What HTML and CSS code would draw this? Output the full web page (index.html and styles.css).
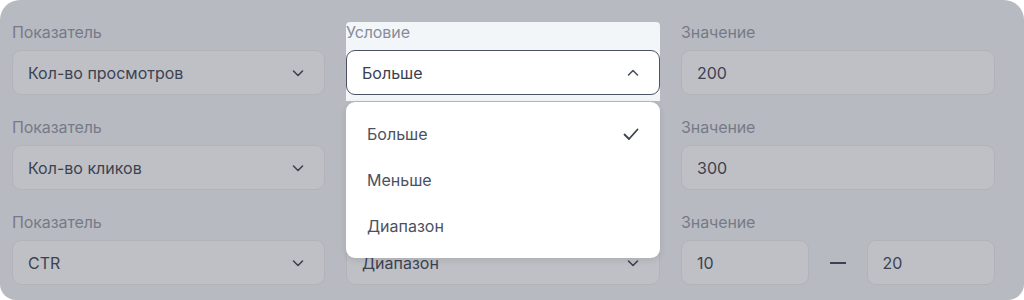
FILE: index.html
```html
<!DOCTYPE html>
<html lang="ru">
<head>
<meta charset="utf-8">
<title>Условия</title>
<link rel="stylesheet" href="styles.css">
</head>
<body>
<div class="card">
  <div class="rules">
    <!-- row 1 -->
    <div class="cell">
      <div class="label">Показатель</div>
      <div class="field">Кол-во просмотров
        <svg class="chev" width="14" height="14" viewBox="0 0 14 14"><path d="M2.5 5l4.5 4.5L11.5 5" fill="none" stroke="currentColor" stroke-width="1.6" stroke-linecap="round" stroke-linejoin="round"/></svg>
      </div>
    </div>
    <div class="cell active">
      <div class="label">Условие</div>
      <div class="field open">Больше
        <svg class="chev" width="14" height="14" viewBox="0 0 14 14"><path d="M2.5 9l4.5-4.5L11.5 9" fill="none" stroke="currentColor" stroke-width="1.6" stroke-linecap="round" stroke-linejoin="round"/></svg>
      </div>
      <ul class="menu">
        <li class="item selected">Больше
          <svg class="check" width="18" height="18" viewBox="0 0 18 18"><path d="M2.5 9.5l4.5 4.5L15.5 4.5" fill="none" stroke="currentColor" stroke-width="1.8" stroke-linecap="round" stroke-linejoin="round"/></svg>
        </li>
        <li class="item">Меньше</li>
        <li class="item">Диапазон</li>
      </ul>
    </div>
    <div class="cell">
      <div class="label">Значение</div>
      <div class="field">200</div>
    </div>

    <!-- row 2 -->
    <div class="cell">
      <div class="label">Показатель</div>
      <div class="field">Кол-во кликов
        <svg class="chev" width="14" height="14" viewBox="0 0 14 14"><path d="M2.5 5l4.5 4.5L11.5 5" fill="none" stroke="currentColor" stroke-width="1.6" stroke-linecap="round" stroke-linejoin="round"/></svg>
      </div>
    </div>
    <div class="cell">
      <div class="label">Условие</div>
      <div class="field">Больше
        <svg class="chev" width="14" height="14" viewBox="0 0 14 14"><path d="M2.5 5l4.5 4.5L11.5 5" fill="none" stroke="currentColor" stroke-width="1.6" stroke-linecap="round" stroke-linejoin="round"/></svg>
      </div>
    </div>
    <div class="cell">
      <div class="label">Значение</div>
      <div class="field">300</div>
    </div>

    <!-- row 3 -->
    <div class="cell">
      <div class="label">Показатель</div>
      <div class="field">CTR
        <svg class="chev" width="14" height="14" viewBox="0 0 14 14"><path d="M2.5 5l4.5 4.5L11.5 5" fill="none" stroke="currentColor" stroke-width="1.6" stroke-linecap="round" stroke-linejoin="round"/></svg>
      </div>
    </div>
    <div class="cell">
      <div class="label">Условие</div>
      <div class="field">Диапазон
        <svg class="chev" width="14" height="14" viewBox="0 0 14 14"><path d="M2.5 5l4.5 4.5L11.5 5" fill="none" stroke="currentColor" stroke-width="1.6" stroke-linecap="round" stroke-linejoin="round"/></svg>
      </div>
    </div>
    <div class="cell">
      <div class="label">Значение</div>
      <div class="range">
        <div class="field">10</div>
        <span class="dash"></span>
        <div class="field">20</div>
      </div>
    </div>
  </div>
</div>
</body>
</html>
```

FILE: styles.css
```css
/* Conditions form, dimmed behind an open select */

html, body
{ margin: 0;
  background: #ffffff;
}

body
{ font-family: Inter, "Noto Sans", sans-serif;
  font-size: 16px;
  color: #3d4251;
}

div.card
{ width: 1024px;
  height: 300px;
  box-sizing: border-box;
  background-color: #b8bac1;
  border-radius: 20px 20px 16px 16px;
  padding: 22px 0 0 12px;
}

div.rules
{ display: grid;
  grid-template-columns: 313px 314px 314px;
  column-gap: 21px;
  row-gap: 22px;
}

div.cell
{ display: flex;
  flex-direction: column;
  gap: 8px;
}

div.label
{ line-height: 20px;
  color: #767a87;
  letter-spacing: -0.1px;
}

div.field
{ display: flex;
  align-items: center;
  justify-content: space-between;
  height: 45px;
  box-sizing: border-box;
  padding: 0 19px 0 15px;
  background-color: #bec0c5;
  border: 1px solid #b1b3b9;
  border-radius: 9px;
  color: #3d4251;
}

svg.chev
{ color: #3d4251;
}

/* the open select sits above the dim layer */

div.active
{ position: relative;
  background-color: #f3f6f9;
  border-radius: 4px 4px 0 0;
  padding-bottom: 6px;
  margin-bottom: -6px;
}

div.active div.label
{ color: #878c99;
}

div.field.open
{ background-color: #ffffff;
  border: 1px solid #4c5261;
  color: #3a404f;
}

div.field.open svg.chev
{ color: #4c5261;
}

ul.menu
{ position: absolute;
  top: calc(100% + 1px);
  left: 0;
  right: 0;
  margin: 0;
  padding: 9px 0;
  list-style: none;
  background-color: #ffffff;
  border-radius: 9px;
  box-shadow: 0 2px 6px rgba(30, 36, 55, 0.12);
  z-index: 10;
}

li.item
{ display: flex;
  align-items: center;
  justify-content: space-between;
  height: 46px;
  padding: 0 20px 0 21px;
  color: #4a5163;
}

svg.check
{ color: #3a404f;
}

div.range
{ display: flex;
  align-items: center;
}

div.range div.field
{ width: 128px;
}

span.dash
{ width: 16px;
  height: 2px;
  margin: 0 21px 0 21px;
  background-color: #3d4251;
  flex: none;
}

div.range div.field:last-child
{ width: 129px;
}
```
